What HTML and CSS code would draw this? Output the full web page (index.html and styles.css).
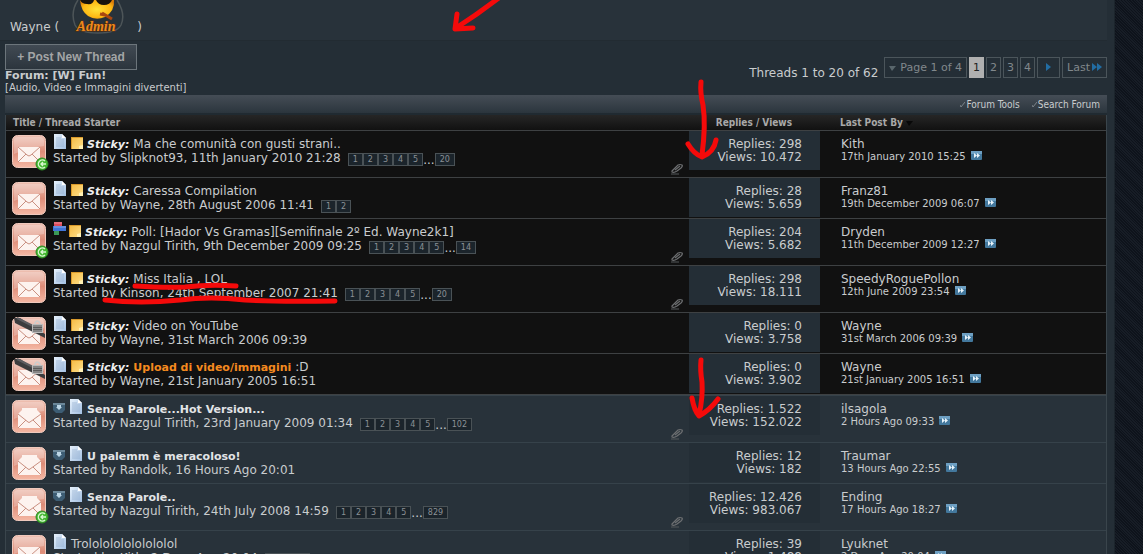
FILE: index.html
```html
<!DOCTYPE html>
<html lang="en">
<head>
  <meta charset="UTF-8">
  <meta name="viewport" content="width=device-width, initial-scale=1.0">
  <title>[W] Fun!</title>
  <link rel="stylesheet" href="styles.css">
</head>
<body>
  <!-- shared icons -->
  <svg class="sprite" aria-hidden="true">
    <defs>
      <linearGradient id="mail-bg" x1="0" y1="0" x2="0" y2="1">
        <stop offset="0" stop-color="#eec0b2"/><stop offset=".5" stop-color="#dd8c78"/><stop offset="1" stop-color="#f5b8a4"/>
      </linearGradient>
      <linearGradient id="doc-bg" x1="0" y1="0" x2="1" y2="1">
        <stop offset="0" stop-color="#e6f1fc"/><stop offset="1" stop-color="#a3c0e2"/>
      </linearGradient>
      <linearGradient id="note-bg" x1="0" y1="0" x2="1" y2="1">
        <stop offset="0" stop-color="#f4b942"/><stop offset="1" stop-color="#ffe08a"/>
      </linearGradient>
      <radialGradient id="face" cx=".5" cy=".5" r=".6">
        <stop offset="0" stop-color="#ffe23a"/><stop offset=".7" stop-color="#fdb813"/><stop offset="1" stop-color="#d97a08"/>
      </radialGradient>
    </defs>
    <symbol id="i-mail" viewBox="0 0 35 35">
      <rect x=".5" y=".5" width="33" height="32" rx="5" fill="url(#mail-bg)" stroke="#efc9bd"/>
      <path d="M2 5Q2 2 6 2H28Q32 2 32 6V11Q18 12 2 19Z" fill="#fff" opacity=".25"/>
      <path d="M6 12H28V27H6Z" fill="#fdf3ef"/>
      <path d="M6 12L15 20Q17 22 19 20L28 12M6 27L14 19M28 27L20 19" fill="none" stroke="#c98f80"/>
    </symbol>
    <symbol id="i-open" viewBox="0 0 35 35">
      <rect x=".5" y=".5" width="33" height="32" rx="5" fill="url(#mail-bg)" stroke="#efc9bd"/>
      <path d="M2 5Q2 2 6 2H28Q32 2 32 6V11Q18 12 2 19Z" fill="#fff" opacity=".25"/>
      <path d="M6 14L10 10V8H25V10L29 14V28H6Z" fill="#fdf3ef"/>
      <path d="M6 14L16 22Q17 23 18 22L29 14M6 28L14 20M29 28L21 20" fill="none" stroke="#c98f80"/>
    </symbol>
    <symbol id="i-posted" viewBox="0 0 14 14">
      <circle cx="7" cy="7" r="6" fill="#43b62f" stroke="#2e8b24"/>
      <path d="M10 4A4 4 0 1 0 10 10M11 7H6M8 5L6 7L8 9" fill="none" stroke="#d8f7d0" stroke-width="1.4"/>
    </symbol>
    <symbol id="i-lock" viewBox="0 0 34 22">
      <path d="M2 1H8L33 17V21Q21 15 3 6Z" fill="#3c3c3e"/>
      <path d="M5 1L31 14" stroke="#5d5d60" stroke-width="2"/>
      <path d="M23 8V6Q25 2 28 6V8" fill="none" stroke="#ccc" stroke-width="1.6"/>
      <rect x="20.500" y="7.500" width="10" height="8" fill="#858585" stroke="#bbb"/>
      <path d="M21 10.500H30M21 12.500H30" stroke="#5a5a5a"/>
    </symbol>
    <symbol id="i-doc" viewBox="0 0 14 16">
      <path d="M1 1H9L13 5V16H1Z" fill="url(#doc-bg)"/>
      <path d="M9 1V5H13Z" fill="#fff"/>
      <path d="M3 5H8M3 7H11M3 9H11M3 11H11M3 13H11" stroke="#89a5c8" stroke-width=".6"/>
    </symbol>
    <symbol id="i-note" viewBox="0 0 12 12">
      <path d="M0 0H12V12H0Z" fill="url(#note-bg)"/><path d="M8 12V9L12 8V12Z" fill="#fff0b4"/>
      <path d="M0 .5H12M.5 0V12" stroke="#d99a2c"/>
    </symbol>
    <symbol id="i-poll" viewBox="0 0 13 14">
      <rect x="1" y="0" width="8" height="4" fill="#db4a5d"/><rect x="0" y="4" width="13" height="5" fill="#3f74d8"/>
      <rect x="1" y="9" width="5" height="4" fill="#3b9a57"/><path d="M1 1H9M1 5H13" stroke="#fff" opacity=".4"/>
    </symbol>
    <symbol id="i-new" viewBox="0 0 12 12">
      <path d="M0 1H12V8L9 11H3L0 8Z" fill="#3d5d74"/><path d="M0 1H12V3H0Z" fill="#6b8799"/>
      <path d="M4 3H8V5H9L6 8L3 5H4Z" fill="#bcd6e6"/>
    </symbol>
    <symbol id="i-go" viewBox="0 0 11 9">
      <rect width="11" height="9" rx="1" fill="#43789d"/><path d="M0 0H11V3H0Z" fill="#6d9fc2"/>
      <path d="M3 2L6 4.500L3 7ZM6 2L9 4.500L6 7Z" fill="#e8f3fa"/>
    </symbol>
    <symbol id="i-clip" viewBox="0 0 14 12">
      <path d="M2 8L8 2Q10 1 12 2Q13 3 11 5L7 8Q4 10 2 9ZM5 7L10 3" fill="none" stroke="#6d6f71" stroke-width="1.200"/>
      <path d="M1 11H9" stroke="#55585a"/>
    </symbol>
  </svg>

  <div class="page">
    <section class="moderators">
      <a href="#">Wayne</a> (
      <svg class="admin-badge" viewBox="0 0 54 34" role="img" aria-label="Admin">
        <path d="M7 0Q-1 12 4 25Q8 33 27 33Q46 33 50 25Q55 14 46 0" fill="none" stroke="#4d5558" stroke-width="1.500"/>
        <path d="M9 0H43Q44 11 34 17Q25 21 17 16Q10 11 9 0Z" fill="url(#face)"/>
        <path d="M9 0H23Q22 5 16 4Q11 4 9 0ZM25 0H41Q39 5 33 5Q27 5 25 0Z" fill="#17130d"/>
        <path d="M29 14L34 15M31 13L41 19" stroke="#a94710" stroke-width="3"/>
        <text x="25" y="31" class="admin-text">Admin</text>
      </svg>
      )
    </section>

    <div class="above-list">
      <div class="forum-info">
        <button type="button" class="new-thread">+ Post New Thread</button>
        <h1>Forum: [W] Fun!</h1>
        <p>[Audio, Video e Immagini divertenti]</p>
      </div>
      <nav class="pagination">
        <span class="count">Threads 1 to 20 of 62</span>
        <a href="#"><svg class="tri" viewBox="0 0 7 5"><path d="M0 0H7L3 5Z" fill="#59666c"/></svg>Page 1 of 4</a>
        <a href="#" class="num current">1</a>
        <a href="#" class="num">2</a>
        <a href="#" class="num">3</a>
        <a href="#" class="num">4</a>
        <a href="#" class="next" aria-label="Next"><svg class="arrow" viewBox="0 0 5 8"><path d="M0 0L5 4L0 8Z" fill="#226da3"/></svg></a>
        <a href="#">Last<svg class="arrows" viewBox="0 0 10 8"><path d="M0 0L5 4L0 8ZM5 0L10 4L5 8Z" fill="#226da3"/></svg></a>
      </nav>
    </div>

    <div class="toolbar">
      <a href="#"><svg class="tick" viewBox="0 0 5 6"><path d="M0 3L1 5L5 0" fill="none" stroke="#7b838a"/></svg>Forum Tools</a>
      <a href="#"><svg class="tick" viewBox="0 0 5 6"><path d="M0 3L1 5L5 0" fill="none" stroke="#7b838a"/></svg>Search Forum</a>
    </div>

    <table class="threads">
      <thead>
        <tr>
          <th class="col-title">Title / Thread Starter</th>
          <th class="col-stats">Replies / Views</th>
          <th class="col-last">Last Post By <svg class="sort" viewBox="0 0 7 5"><path d="M0 0H7L3 5Z" fill="#080808"/></svg></th>
        </tr>
      </thead>
      <tbody id="thread-list"></tbody>
    </table>
  </div>

  <!-- pen marks over the page -->
  <svg class="marks" viewBox="0 0 1143 554" aria-hidden="true">
    <path d="M500 -3Q478 14 456 28M457 14L455 29L473 28"/>
    <path d="M701 82Q700 93 703 105Q706 125 702 155M688 144Q694 154 702 157Q714 152 716 140"/>
    <path d="M701 360Q700 370 702 382Q703 398 699 415M692 398Q694 410 699 416Q710 410 718 399"/>
    <path d="M135 286Q165 288 185 287Q210 284 236 286"/>
    <path d="M105 300Q140 304 180 300Q210 296 245 300Q275 302 335 301"/>
  </svg>

  <script>
    const threads = [
      { icons: ['doc', 'note'], sticky: true, title: 'Ma che comunità con gusti strani..', by: 'Slipknot93, 11th January 2010 21:28', pages: [1, 2, 3, 4, 5, 20], posted: true, clip: true, replies: '298', views: '10.472', last: 'Kith', date: '17th January 2010 15:25' },
      { icons: ['doc', 'note'], sticky: true, title: 'Caressa Compilation', by: 'Wayne, 28th August 2006 11:41', pages: [1, 2], replies: '28', views: '5.659', last: 'Franz81', date: '19th December 2009 06:07' },
      { icons: ['poll', 'note'], sticky: true, title: 'Poll: [Hador Vs Gramas][Semifinale 2º Ed. Wayne2k1]', by: 'Nazgul Tirith, 9th December 2009 09:25', pages: [1, 2, 3, 4, 5, 14], posted: true, clip: true, replies: '204', views: '5.682', last: 'Dryden', date: '11th December 2009 12:27' },
      { icons: ['doc', 'note'], sticky: true, title: 'Miss Italia , LOL', by: 'Kinson, 24th September 2007 21:41', pages: [1, 2, 3, 4, 5, 20], clip: true, replies: '298', views: '18.111', last: 'SpeedyRoguePollon', date: '12th June 2009 23:54' },
      { icons: ['doc', 'note'], sticky: true, title: 'Video on YouTube', by: 'Wayne, 31st March 2006 09:39', locked: true, replies: '0', views: '3.758', last: 'Wayne', date: '31st March 2006 09:39' },
      { icons: ['doc', 'note'], sticky: true, title: '<b class="hot">Upload di video/immagini</b> :D', by: 'Wayne, 21st January 2005 16:51', locked: true, replies: '0', views: '3.902', last: 'Wayne', date: '21st January 2005 16:51' },
      { icons: ['new', 'doc'], unread: true, title: 'Senza Parole...Hot Version...', by: 'Nazgul Tirith, 23rd January 2009 01:34', pages: [1, 2, 3, 4, 5, 102], clip: true, replies: '1.522', views: '152.022', last: 'ilsagola', date: '2 Hours Ago 09:33' },
      { icons: ['new', 'doc'], unread: true, title: 'U palemm è meracoloso!', by: 'Randolk, 16 Hours Ago 20:01', replies: '12', views: '182', last: 'Traumar', date: '13 Hours Ago 22:55' },
      { icons: ['new', 'doc'], unread: true, title: 'Senza Parole..', by: 'Nazgul Tirith, 24th July 2008 14:59', pages: [1, 2, 3, 4, 5, 829], posted: true, clip: true, replies: '12.426', views: '983.067', last: 'Ending', date: '17 Hours Ago 18:27' },
      { icons: ['doc'], title: 'Trololololololololol', by: 'Kith, 2 Days Ago 20:04', pages: [1, 2, 3], replies: '39', views: '1.488', last: 'Lyuknet', date: '2 Days Ago 20:04' }
    ];

    const icon = name => `<svg class="icon ${name}"><use href="#i-${name}"/></svg>`;

    function renderPages(pages) {
      if (!pages) return '';
      const links = pages.map((p, i) =>
        (i === 5 ? '<span class="dots">...</span>' : '') + `<a href="#">${p}</a>`);
      return `<span class="pages">${links.join('')}</span>`;
    }

    document.getElementById('thread-list').innerHTML = threads.map(t => `
      <tr class="${t.sticky ? 'sticky' : 'normal'}">
        <td>
          <div class="thread">
            <div class="status">${icon(t.unread ? 'open' : 'mail')}${t.posted ? icon('posted') : ''}${t.locked ? icon('lock') : ''}</div>
            <div class="info">
              <div class="title">${t.icons.map(icon).join('')}${t.sticky ? '<b class="prefix">Sticky:</b>' : ''}<a href="#" class="${t.unread ? 'unread' : ''}">${t.title}</a></div>
              <div class="starter">Started by ${t.by}${renderPages(t.pages)}</div>
            </div>
            ${t.clip ? icon('clip') : ''}
          </div>
        </td>
        <td><div class="stats">Replies: ${t.replies}<br>Views: ${t.views}</div></td>
        <td><div class="last"><a href="#">${t.last}</a><div class="date">${t.date}${icon('go')}</div></div></td>
      </tr>`).join('');
  </script>
</body>
</html>
```

FILE: styles.css
```css
:root {
  --bg: #242e36;
  --panel: #28323a;
  --black: #111;
  --line: #3e4143;
  --text: #c9ccce;
}
* { box-sizing: border-box; }
body {
  margin: 0;
  height: 100vh;
  overflow: hidden;
  padding-right: 28px;
  background: repeating-linear-gradient(45deg, #0e131b 0 1px, #171d26 1px 2px);
  font-family: Verdana, "DejaVu Sans", sans-serif;
  font-size: 12px;
  color: var(--text);
}
a { color: inherit; text-decoration: none; }
.sprite { position: absolute; width: 0; height: 0; }
.page {
  min-height: 100vh;
  padding: 0 7px 0 5px;
  background: var(--bg);
  border-right: 1px solid #1c252c;
}
.moderators {
  display: flex;
  align-items: flex-end;
  gap: 4px;
  height: 41px;
  margin: 0 0 3px -5px;
  padding: 0 0 6px 10px;
  background: var(--panel);
  border-bottom: 1px solid #222b32;
}
.admin-badge {
  width: 54px;
  height: 34px;
  margin: 0 8px;
}
.admin-text {
  font: italic bold 14px "Liberation Serif", serif;
  fill: #ed8a1d;
  stroke: #5c2c08;
  stroke-width: 1px;
  paint-order: stroke;
  text-anchor: middle;
}
.above-list {
  display: flex;
  justify-content: space-between;
  align-items: flex-start;
  height: 51px;
}
.new-thread {
  display: block;
  width: 132px;
  height: 26px;
  padding: 0;
  background: linear-gradient(#414a53, #2c353d);
  border: 1px solid #6c757b;
  color: #a3a5a6;
  font: bold 12px "Liberation Sans", Arial, sans-serif;
}
.forum-info h1 {
  margin: 0;
  font-size: 11px;
  line-height: 12px;
}
.forum-info p {
  margin: 0;
  font-size: 10px;
  line-height: 12px;
}
.pagination {
  display: flex;
  align-items: flex-start;
  gap: 2px;
  padding-top: 13px;
  color: #81888c;
}
.count {
  margin: 8px 4px 0 0;
  line-height: 16px;
  color: var(--text);
}
.pagination a {
  height: 21px;
  padding: 0 4px;
  border: 1px solid #4b555b;
  font-size: 11px;
  line-height: 20px;
}
.pagination .num { padding: 0 3px; }
.pagination .current {
  background: #b0b0b0;
  border-color: #b0b0b0;
  color: #222;
}
.pagination .next { padding: 0 8px; }
.tri { width: 7px; height: 5px; margin-right: 4px; }
.arrow { width: 5px; height: 8px; }
.arrows { width: 10px; height: 8px; margin-left: 2px; }
.toolbar {
  display: flex;
  justify-content: flex-end;
  align-items: center;
  gap: 12px;
  height: 20px;
  padding-right: 7px;
  background: linear-gradient(#454d56, #2b353d);
  border-bottom: 2px solid #202a31;
  font-family: "DejaVu Sans Condensed", "DejaVu Sans", sans-serif;
  font-size: 10px;
}
.tick { width: 5px; height: 6px; margin-right: 1px; }

/* Thread list */
.threads {
  width: 100%;
  border-collapse: separate;
  border-spacing: 0;
  table-layout: fixed;
  border: solid #3a454c;
  border-width: 0 1px;
}
.threads th {
  height: 16px;
  padding: 0 7px;
  background: linear-gradient(#262626, #111);
  border-bottom: 1px solid var(--line);
  font-family: "DejaVu Sans Condensed", "DejaVu Sans", sans-serif;
  font-size: 10px;
  line-height: 15px;
  text-align: left;
  color: #a9a9a9;
}
.threads .col-stats { width: 131px; padding: 0 28px 0 0; text-align: right; }
.threads .col-last { width: 286px; padding-left: 20px; }
.sort { width: 7px; height: 5px; }
.threads td {
  padding: 0;
  vertical-align: top;
  border-bottom: 1px solid var(--line);
}
.sticky td { background: var(--black); }
.normal td { background: var(--panel); border-color: #36424a; }
.sticky + .normal td { border-top: 1px solid #36424a; }
.thread {
  display: flex;
  min-height: 40px;
}
.status {
  position: relative;
  width: 35px;
  height: 34px;
  margin: 4px 6px 0;
}
.icon { flex: none; }
.mail, .open { display: block; width: 35px; height: 35px; }
.posted {
  position: absolute;
  right: -2px;
  bottom: -2px;
  width: 14px;
  height: 14px;
}
.lock {
  position: absolute;
  top: 0;
  left: 0;
  width: 34px;
  height: 22px;
}
.info { flex: 1; }
.title {
  display: flex;
  align-items: center;
  height: 20px;
  white-space: pre;
}
.title, .stats, .last { line-height: 13px; }
.title a { padding-top: 6px; }
.title b, .title .unread { font-size: 11px; }
.doc { width: 14px; height: 16px; margin-right: 4px; }
.note { width: 12px; height: 12px; margin: 4px 4px 0 0; }
.poll { width: 13px; height: 14px; margin-right: 3px; }
.new { width: 12px; height: 12px; margin: 4px 4px 0 0; }
.prefix {
  padding: 6px 4px 0 0;
  font-style: italic;
  color: #eee;
}
.hot { color: #f58a1f; }
.unread { font-weight: bold; color: #e2e4e6; }
.starter { display: flex; line-height: 15px; }
.pages {
  display: flex;
  padding: 2px 0 0 7px;
}
.pages a {
  height: 13px;
  padding: 0 4px;
  background: #1b242b;
  border: 1px solid #4a5256;
  font-size: 8px;
  line-height: 12px;
  color: #8b9195;
}
.clip {
  width: 14px;
  height: 12px;
  margin: 32px 5px 2px 0;
}
.stats {
  height: 39px;
  padding: 7px 18px 0 0;
  background: var(--bg);
  text-align: right;
}
.last { padding: 7px 0 0 21px; }
.date { font-size: 10px; line-height: 12px; }
.go { width: 11px; height: 9px; margin-left: 5px; }

.marks {
  position: absolute;
  top: 0;
  left: 0;
  width: 1143px;
  height: 554px;
  fill: none;
  stroke: #f50a0a;
  stroke-width: 5px;
  stroke-linecap: round;
  stroke-linejoin: round;
  pointer-events: none;
}
```
